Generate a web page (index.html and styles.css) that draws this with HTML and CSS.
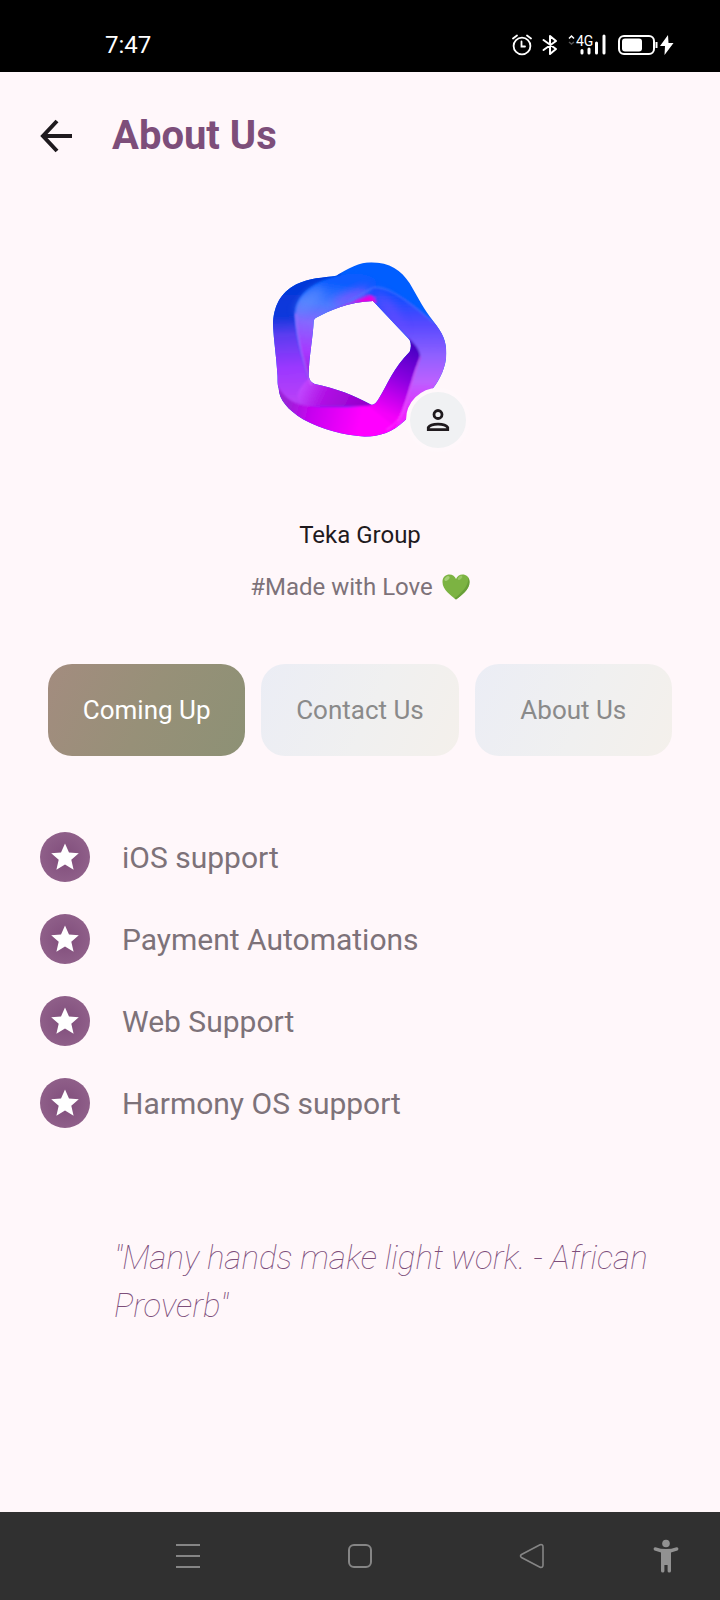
FILE: index.html
```html
<!DOCTYPE html>
<html lang="en">
<head>
<meta charset="utf-8">
<meta name="viewport" content="width=device-width, initial-scale=1">
<title>About Us</title>
<link rel="stylesheet" href="styles.css">
</head>
<body>
<div class="status">
  <time class="clock">7:47</time>
  <div class="indicators">
    <svg width="20" height="22" viewBox="0 0 20 22" fill="none" stroke="#fff" stroke-width="1.8" stroke-linecap="round"><circle cx="10" cy="12" r="8.4"/><path d="M9.500 7.500V12.500H13M1 4.500L5 1.500M19 4.500L15 1.500"/></svg>
    <svg width="16" height="22" viewBox="0 0 16 22" fill="none" stroke="#fff" stroke-width="2" stroke-linejoin="round" stroke-linecap="round"><path d="M1.500 6L14 15L8 20V2L14 7L1.500 16"/></svg>
    <svg class="signal" width="40" height="22" viewBox="0 0 40 22"><path d="M1 4.500L3.500 2L6 4.500" fill="none" stroke="#fff" stroke-width="1.5"/><path d="M1 8L3.500 10L6 8" fill="none" stroke="#555" stroke-width="1.5"/><text x="8" y="12">4G</text><path d="M14 16.500V19M21 15V19M28.500 9V19M36 2V19" stroke="#fff" stroke-width="3" stroke-linecap="round"/></svg>
    <svg width="40" height="22" viewBox="0 0 40 22"><rect x="1" y="2" width="35" height="18" rx="5" fill="none" stroke="#fff" stroke-width="2"/><rect x="4" y="4.500" width="20" height="13" rx="3" fill="#fff"/><path d="M38.500 8V14" stroke="#fff" stroke-width="2"/></svg>
    <svg width="14" height="22" viewBox="0 0 14 22"><path d="M8 1L0 12H5L4.500 21L13.500 9H8.500Z" fill="#fff"/></svg>
  </div>
</div>

<header class="topbar">
  <button class="back" type="button" aria-label="Back"><svg width="32" height="34" viewBox="0 0 32 34" fill="none" stroke="#1f1a1e" stroke-width="4"><path d="M32 17H4M17 2L3 17L17 32"/></svg></button>
  <h1 class="title">About Us</h1>
</header>

<main class="content">
  <section class="profile">
    <div class="avatar">
      <svg class="ring" viewBox="40 36 522 526" role="img" aria-label="Teka Group logo">
        <defs>
          <clipPath id="body"><path clip-rule="evenodd" d="M230 77C265 55 300 37 335 37C390 37 425 62 450 100C480 150 490 175 522 215C550 250 560 275 560 310C560 350 540 390 520 415L435 512C400 545 360 560 315 560C250 555 190 540 130 508C85 480 58 450 57 415C52 400 55 390 53 370C50 320 42 270 40 225C42 170 60 130 110 103C150 82 190 84 230 77ZM340 153L450 270Q457 286 450 305C400 355 385 400 358 445Q345 468 335 464C280 435 230 415 165 402Q148 395 147 375C148 320 160 260 162 215Q163 205 172 202C210 182 265 156 340 153Z"/></clipPath>
          <filter id="soft" x="-20%" y="-20%" width="140%" height="140%"><feGaussianBlur stdDeviation="3"/></filter>
          <filter id="haze" x="-50%" y="-50%" width="200%" height="200%"><feGaussianBlur stdDeviation="14"/></filter>
          <linearGradient id="left" gradientUnits="userSpaceOnUse" x1="90" y1="90" x2="110" y2="540"><stop offset="0" stop-color="#0038d8"/><stop offset=".24" stop-color="#1038dc"/><stop offset=".36" stop-color="#5a3cf0"/><stop offset=".58" stop-color="#9a38ff"/><stop offset=".8" stop-color="#b840f8"/><stop offset="1" stop-color="#a000d8"/></linearGradient>
          <linearGradient id="inleft" gradientUnits="userSpaceOnUse" x1="190" y1="90" x2="140" y2="400"><stop offset="0" stop-color="#0a5cff"/><stop offset=".22" stop-color="#4a7cff"/><stop offset=".42" stop-color="#8468ff"/><stop offset=".7" stop-color="#a838ff"/><stop offset="1" stop-color="#9818d8"/></linearGradient>
          <linearGradient id="right" gradientUnits="userSpaceOnUse" x1="440" y1="130" x2="440" y2="520"><stop offset="0" stop-color="#0a50ff"/><stop offset=".22" stop-color="#5248ff"/><stop offset=".48" stop-color="#9060ff"/><stop offset=".68" stop-color="#bc60ff"/><stop offset=".95" stop-color="#f020ff"/></linearGradient>
          <linearGradient id="dark" gradientUnits="userSpaceOnUse" x1="465" y1="295" x2="375" y2="490"><stop offset="0" stop-color="#4a00c4"/><stop offset=".45" stop-color="#8a00e0"/><stop offset="1" stop-color="#f400fa"/></linearGradient>
          <linearGradient id="floor" gradientUnits="userSpaceOnUse" x1="130" y1="400" x2="300" y2="480"><stop offset="0" stop-color="#c048ff"/><stop offset=".4" stop-color="#b010e4"/><stop offset="1" stop-color="#9600cc"/></linearGradient>
          <linearGradient id="base" gradientUnits="userSpaceOnUse" x1="80" y1="470" x2="300" y2="520"><stop offset="0" stop-color="#9c20d8"/><stop offset=".35" stop-color="#c800f0"/><stop offset="1" stop-color="#ff00ff"/></linearGradient>
        </defs>
        <g clip-path="url(#body)">
          <path fill="#005eff" d="M30 30H570V570H30Z"/>
          <g filter="url(#soft)">
            <path fill="url(#left)" d="M245 74C170 90 110 125 105 190C105 260 130 330 150 400L150 480H20V60H230Z"/>
            <path fill="url(#base)" d="M50 400C70 445 110 468 150 468C220 472 300 470 345 464L480 420L440 570H40Z"/>
            <path fill="url(#inleft)" d="M235 78C150 105 108 140 108 195C110 260 130 330 152 402L180 380L180 205L290 160L345 112C370 80 300 60 235 78Z"/>
            <path fill="url(#floor)" d="M148 385C100 430 110 460 140 467C200 470 280 470 345 466L260 410Z"/>
            <path fill="url(#right)" d="M335 112C370 108 420 130 460 165L522 215L580 240V480L400 560C430 480 440 410 480 320L440 260L335 160Z"/>
            <path fill="url(#dark)" d="M447 265C470 285 483 305 482 325C455 380 448 460 400 525L330 470L380 380Z"/>
          </g>
          <ellipse cx="275" cy="140" rx="60" ry="16" transform="rotate(-24 275 140)" fill="#9a50ff" opacity=".7" filter="url(#haze)"/>
          <path d="M200 190Q270 158 325 132L350 140V160L290 165Z" fill="#c028f0" opacity=".75" filter="url(#soft)"/>
          <path d="M285 157L335 136L352 158Z" fill="#e800e0" filter="url(#soft)"/>
          <path d="M345 115L400 150L440 250L348 158Z" fill="#7a50ff" opacity=".5" filter="url(#haze)"/>
          <ellipse cx="150" cy="150" rx="55" ry="18" transform="rotate(-45 150 150)" fill="#6090ff" opacity=".6" filter="url(#haze)"/>
          <g fill="none" stroke-width="3" filter="url(#soft)"><path d="M108 190C110 260 130 330 155 405" stroke="#cf78ff"/><path d="M265 158Q330 115 345 112C390 112 435 145 522 218" stroke="#5a80ff"/><path d="M482 320C460 380 440 450 432 482Q420 515 380 540" stroke="#f060ff"/></g>
        </g>
      </svg>
      <button class="badge" type="button" aria-label="Profile"><svg width="24" height="24" viewBox="0 0 24 24" fill="none" stroke="#1f1a1e" stroke-width="2.800"><circle cx="12" cy="6.500" r="4"/><path d="M2.300 21.700V19.500C5 15 19 15 21.700 19.500V21.700Z"/></svg></button>
    </div>
    <h2 class="name">Teka Group</h2>
    <p class="tagline">#Made with Love
      <svg width="28" height="26" viewBox="0 0 28 26" role="img" aria-label="green heart"><path d="M14 25.500C9 21.500 .5 16 .5 8C.5 2.500 4 .5 7.500 .5C10.500 .5 13 2.500 14 5C15 2.500 17.500 .5 20.500 .5C24 .5 27.500 2.500 27.500 8C27.500 16 19 21.500 14 25.500Z" fill="#7cb342"/><path d="M14 25.500C19 21.500 27.500 16 27.500 8Q27.500 5 26.300 3.500C27 11 20 19 12.500 24.300Z" fill="#689f38"/><ellipse cx="5" cy="4.500" rx="3" ry="1.800" transform="rotate(-42 5 4.500)" fill="#a5cf75"/><ellipse cx="18" cy="3.800" rx="2.800" ry="1.500" transform="rotate(-40 18 3.800)" fill="#9ac866"/></svg>
    </p>
  </section>

  <nav class="tabs">
    <button class="tab active" type="button">Coming Up</button>
    <button class="tab" type="button">Contact Us</button>
    <button class="tab" type="button">About Us</button>
  </nav>

  <ul class="features">
    <li class="feature"><span class="bullet"><svg width="28" height="28" viewBox="0 0 28 28"><path d="M14 .5L18 9.500L27.800 10.300L20.300 16.800L22.600 26.800L14 21.500L5.400 26.800L7.700 16.800L.2 10.300L10 9.500Z" fill="#fff"/></svg></span>iOS support</li>
    <li class="feature"><span class="bullet"><svg width="28" height="28" viewBox="0 0 28 28"><path d="M14 .5L18 9.500L27.800 10.300L20.300 16.800L22.600 26.800L14 21.500L5.400 26.800L7.700 16.800L.2 10.300L10 9.500Z" fill="#fff"/></svg></span>Payment Automations</li>
    <li class="feature"><span class="bullet"><svg width="28" height="28" viewBox="0 0 28 28"><path d="M14 .5L18 9.500L27.800 10.300L20.300 16.800L22.600 26.800L14 21.500L5.400 26.800L7.700 16.800L.2 10.300L10 9.500Z" fill="#fff"/></svg></span>Web Support</li>
    <li class="feature"><span class="bullet"><svg width="28" height="28" viewBox="0 0 28 28"><path d="M14 .5L18 9.500L27.800 10.300L20.300 16.800L22.600 26.800L14 21.500L5.400 26.800L7.700 16.800L.2 10.300L10 9.500Z" fill="#fff"/></svg></span>Harmony OS support</li>
  </ul>

  <blockquote class="quote">"Many hands make light work. - African Proverb"</blockquote>
</main>

<footer class="navbar">
  <button class="key menu" type="button" aria-label="Recent apps"><svg width="26" height="26" viewBox="0 0 26 26" fill="none" stroke="#858585" stroke-width="2"><path d="M1 2H25M1 13H25M1 24H25"/></svg></button>
  <button class="key" type="button" aria-label="Home"><svg width="26" height="26" viewBox="0 0 26 26" fill="none" stroke="#858585" stroke-width="2"><rect x="2" y="2" width="22" height="22" rx="5"/></svg></button>
  <button class="key" type="button" aria-label="Back"><svg width="26" height="26" viewBox="0 0 26 26" fill="none" stroke="#858585" stroke-width="1.600"><path d="M2.500 11.500L21 1.800Q24 1 24 4V22Q24 25 21 24.200L2.500 14.500Q.5 13 2.500 11.500Z"/></svg></button>
  <button class="key access" type="button" aria-label="Accessibility"><svg width="26" height="34" viewBox="0 0 26 34" fill="#919191"><circle cx="13" cy="4.500" r="3.800"/><path d="M2.500 8.200Q13 12 23.500 8.200Q25 8.200 25.400 9.600Q25.500 11 24.500 11.600L18 13.500V32Q18 33.500 16.200 33.500Q14.600 33.500 14.600 32V26H11.400V32Q11.400 33.500 9.800 33.500Q8 33.500 8 32V13.500L1.500 11.600Q.5 11 .6 9.600Q1 8.200 2.500 8.200Z"/></svg></button>
</footer>
</body>
</html>
```
FILE: styles.css
```css
* { box-sizing: border-box; }
body {
  margin: 0;
  min-height: 100vh;
  display: flex;
  flex-direction: column;
  background: #fff7fa;
  color: #7d7279;
  font-family: Roboto, "Liberation Sans", sans-serif;
}
button { padding: 0; border: 0; background: none; font: inherit; color: inherit; }
svg { display: block; }

.status {
  height: 72px;
  padding: 18px 46px 0 105px;
  display: flex;
  align-items: center;
  justify-content: space-between;
  background: #000;
  color: #fff;
}
.clock { font-size: 24px; line-height: 28px; }
.indicators { display: flex; align-items: center; gap: 10px; }
.indicators svg:last-child { margin-left: -8px; }
.signal text { font-size: 14px; fill: #fff; }

.topbar {
  padding: 40px 40px 0;
  display: flex;
  align-items: center;
  gap: 40px;
}
.title { margin: 0; font-size: 40px; line-height: 48px; font-weight: 700; color: #7d4e7a; }

.content { flex: 1; padding: 102px 40px 0; }
.profile { display: flex; flex-direction: column; align-items: center; }
.avatar { position: relative; width: 174px; }
.ring { width: 100%; }
.badge {
  position: absolute;
  right: -23px;
  bottom: -15px;
  width: 64px;
  height: 64px;
  display: grid;
  place-items: center;
  border: 4px solid #fff8fb;
  border-radius: 50%;
  background: #f0f1f3;
}
.name { margin: 84px 0 0; font-size: 24px; line-height: 28px; font-weight: 400; color: #1f1a1e; }
.tagline {
  margin: 24px 0 0;
  display: flex;
  align-items: center;
  gap: 9px;
  font-size: 24px;
  line-height: 28px;
}

.tabs {
  margin: 63px 8px 0;
  display: grid;
  grid-template-columns: repeat(3, 1fr);
  gap: 16px;
}
.tab {
  height: 92px;
  border-radius: 24px;
  background: linear-gradient(115deg, #ebedf5, #f0f0f0 55%, #f4f0eb);
  color: #8a8a8a;
  font-size: 26px;
}
.tab.active { background: linear-gradient(115deg, #a38c7f, #979078 50%, #8d9175); color: #fff; }

.features {
  margin: 76px 0 0;
  padding: 0;
  display: grid;
  gap: 32px;
  list-style: none;
  font-size: 30px;
}
.feature { display: flex; align-items: center; gap: 32px; }
.bullet {
  width: 50px;
  height: 50px;
  display: grid;
  place-items: center;
  border-radius: 50%;
  background: radial-gradient(circle, #84527f 20%, #8f5f89 70%);
}

.quote {
  margin: 106px 0 0 74px;
  font-size: 33px;
  line-height: 48px;
  font-style: italic;
  font-weight: 100;
  color: #7d4e7a;
}

.navbar {
  height: 88px;
  display: grid;
  grid-template-columns: 102fr 172fr 172fr 172fr 102fr;
  align-items: center;
  background: #303030;
}
.key { display: grid; place-items: center; }
.menu { grid-column: 2; }
.access { padding-right: 6px; }
```
